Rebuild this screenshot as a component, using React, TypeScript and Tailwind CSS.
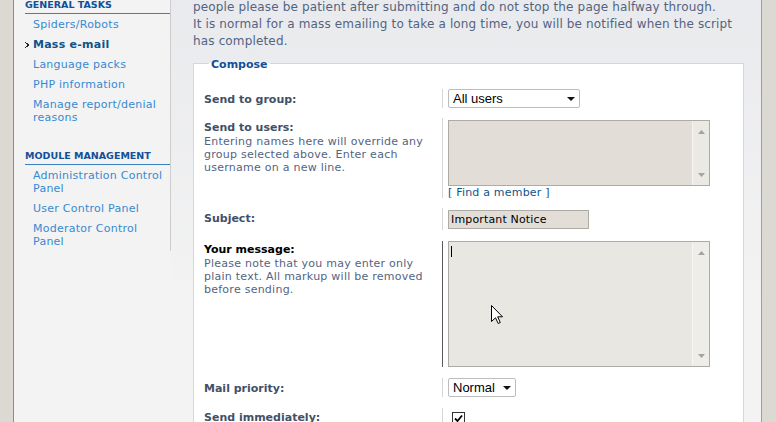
import React from "react";

type NavItem = { label: string; active?: boolean };

const generalTasks: NavItem[] = [
  { label: "Spiders/Robots" },
  { label: "Mass e-mail", active: true },
  { label: "Language packs" },
  { label: "PHP information" },
  { label: "Manage report/denial\nreasons" },
];

const moduleManagement: NavItem[] = [
  { label: "Administration Control\nPanel" },
  { label: "User Control Panel" },
  { label: "Moderator Control\nPanel" },
];

function MenuHeader({ title, className = "" }: { title: string; className?: string }) {
  return (
    <div
      className={`ml-[11px] border-b border-[#3c7fbf] pb-[2px] text-[9.5px] font-bold uppercase leading-[13px] text-[#115098] ${className}`}
    >
      {title}
    </div>
  );
}

function Bullet() {
  return (
    <svg width="4" height="6" viewBox="0 0 4 6" className="mt-[4px]">
      <rect x="0" y="0" width="1" height="1" fill="#222" />
      <rect x="1" y="1" width="2" height="1" fill="#222" />
      <rect x="2" y="2" width="2" height="2" fill="#222" />
      <rect x="1" y="4" width="2" height="1" fill="#222" />
      <rect x="0" y="5" width="1" height="1" fill="#222" />
    </svg>
  );
}

function MenuList({ items }: { items: NavItem[] }) {
  return (
    <ul>
      {items.map((item) => (
        <li key={item.label} className="flex pb-[3px] pl-[11px] pt-[4px] text-[11px] leading-[13px] tracking-[0.25px]">
          <span className="w-[8px] shrink-0">{item.active && <Bullet />}</span>
          <a
            href="#"
            className={`whitespace-pre-line ${item.active ? "font-bold text-[#105289]" : "text-[#368ad2]"}`}
          >
            {item.label}
          </a>
        </li>
      ))}
    </ul>
  );
}

function Select({ value, className }: { value: string; className: string }) {
  return (
    <div
      className={`flex h-[19px] items-center justify-between rounded-[2px] border border-[#bdbdbd] bg-white pl-[4px] pr-[4px] font-['Liberation_Sans',Arial,sans-serif] text-[13px] leading-none text-black ${className}`}
    >
      <span>{value}</span>
      <svg width="8" height="4" viewBox="0 0 8 4">
        <path d="M0 0h8L4 4z" fill="#111" />
      </svg>
    </div>
  );
}

function TextBox({
  height,
  bg,
  bar,
  children,
}: {
  height: string;
  bg: string;
  bar: string;
  children?: React.ReactNode;
}) {
  return (
    <div className={`flex w-[262px] border border-[#aeaba5] ${height} ${bg}`}>
      <div className="relative flex-1">{children}</div>
      <div
        className={`flex w-[17px] flex-col items-center justify-between border-l border-[#f6f5f1] pb-[8px] pt-[9px] ${bar}`}
      >
        <svg width="7" height="4" viewBox="0 0 7 4">
          <path d="M0 4h7L3.5 0z" fill="#a3a3a3" />
        </svg>
        <svg width="7" height="4" viewBox="0 0 7 4">
          <path d="M0 0h7L3.5 4z" fill="#a3a3a3" />
        </svg>
      </div>
    </div>
  );
}

function Row({
  label,
  desc,
  labelPt,
  focused,
  className = "",
  ddClass = "",
  children,
}: {
  label: string;
  desc?: string;
  labelPt: string;
  focused?: boolean;
  className?: string;
  ddClass?: string;
  children: React.ReactNode;
}) {
  return (
    <div className={`flex ${className}`}>
      <div className={`w-[238px] shrink-0 ${labelPt}`}>
        <div className={`text-[11px] font-bold leading-[14px] ${focused ? "text-black" : "text-[#425067]"}`}>
          {label}
        </div>
        {desc && (
          <div className="whitespace-pre-line text-[11px] leading-[13px] tracking-[0.25px] text-[#536482]">
            {desc}
          </div>
        )}
      </div>
      <div className={`border-l pl-[5px] ${focused ? "border-[#5a5a5a]" : "border-[#d6d6d6]"} ${ddClass}`}>
        {children}
      </div>
    </div>
  );
}

export default function App() {
  return (
    <div className="flex h-[422px] w-[776px] overflow-hidden bg-[#dcd9d2] font-['DejaVu_Sans',Verdana,sans-serif]">
      <div className="w-[13px] shrink-0" />
      <div className="flex w-[749px] shrink-0 border-x border-l-[#8e8c87] border-r-[#a09e99]">
        {/* Menu */}
        <aside className="w-[157px] shrink-0 bg-[#f3f3f3]">
          <div className="flex h-[251px] flex-col border-r border-[#cdcdcd]">
            <MenuHeader title="General tasks" className="-mt-[2px]" />
            <MenuList items={generalTasks} />
            <MenuHeader title="Module management" className="mt-[22px]" />
            <MenuList items={moduleManagement} />
          </div>
        </aside>

        {/* Main */}
        <main className="flex-1 bg-[linear-gradient(#e9eaed,#f3f3f3_300px)] pl-[22px] pr-[17px]">
          <p className="-mt-[1px] whitespace-nowrap text-[12px] leading-[17px] tracking-[0.15px] text-[#536482]">
            people please be patient after submitting and do not stop the page halfway through.
            <br />
            It is normal for a mass emailing to take a long time, you will be notified when the script
            <br />
            has completed.
          </p>

          <fieldset className="mt-[4px] w-[551px] border border-[#d7d7d7] bg-white px-[10px]">
            <legend className="ml-[5px] px-[2px] pt-[4px] text-[11px] font-bold leading-[14px] text-[#115098]">
              Compose
            </legend>

            <Row label="Send to group:" labelPt="pt-[4px]" className="mb-[10px] mt-[17px]">
              <Select value="All users" className="w-[132px]" />
            </Row>

            <Row
              label="Send to users:"
              desc={"Entering names here will override any\ngroup selected above. Enter each\nusername on a new line."}
              labelPt="pt-[3px]"
              className="mb-[10px]"
              ddClass="pt-[2px]"
            >
              <TextBox height="h-[66px]" bg="bg-[#e2ded7]" bar="bg-[#ebe9e4]" />
              <a href="#" className="mt-[1px] block text-[11px] leading-[11px] tracking-[0.2px] text-[#105289]">
                [ Find a member ]
              </a>
            </Row>

            <Row label="Subject:" labelPt="pt-[4px]" className="mb-[11px]" ddClass="pb-[1px] pt-[2px]">
              <div className="flex h-[19px] w-[141px] items-center border border-[#aeaba5] bg-[#e2ded7] pl-[2px] text-[11px] leading-none tracking-[0.15px] text-black">
                Important Notice
              </div>
            </Row>

            <Row
              label="Your message:"
              desc={"Please note that you may enter only\nplain text. All markup will be removed\nbefore sending."}
              labelPt="pt-[2px]"
              focused
              className="mb-[11px]"
            >
              <TextBox height="h-[126px]" bg="bg-[#e8e7e1]" bar="bg-[#eeede9]">
                <span className="absolute left-[2px] top-[4px] h-[11px] w-px bg-black" />
                <svg
                  width="12"
                  height="19"
                  viewBox="0 0 12 19"
                  className="absolute left-[42px] top-[63px]"
                >
                  <path
                    d="M0.5 0.5V16.5L4.5 12.8L7.2 18.5L9.3 17.5L6.7 11.8H11.5Z"
                    fill="#fff"
                    stroke="#000"
                    strokeWidth="1"
                    strokeLinejoin="miter"
                  />
                </svg>
              </TextBox>
            </Row>

            <Row label="Mail priority:" labelPt="pt-[4px]" className="mb-[11px]">
              <Select value="Normal" className="w-[68px]" />
            </Row>

            <Row label="Send immediately:" labelPt="pt-[3px]" ddClass="pt-[4px]">
              <div className="ml-[4px] flex h-[13px] w-[13px] items-center justify-center border border-[#333] bg-white">
                <svg width="9" height="9" viewBox="0 0 9 9">
                  <path d="M1 4.5L3.5 7L8 1.5" fill="none" stroke="#000" strokeWidth="1.8" />
                </svg>
              </div>
            </Row>
          </fieldset>
        </main>
      </div>
      <div className="w-[14px] shrink-0" />
    </div>
  );
}
